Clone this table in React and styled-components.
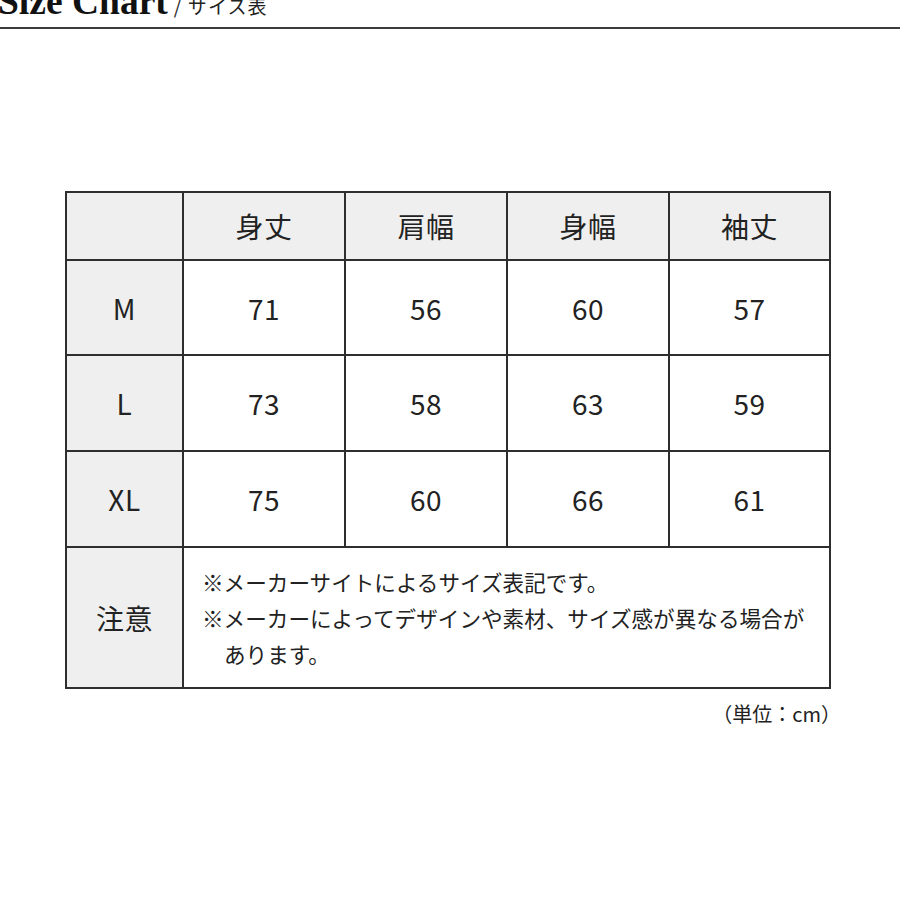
import React from "react";
import styled, { createGlobalStyle } from "styled-components";

const Global = createGlobalStyle`
  html, body { margin: 0; padding: 0; background: #fff; }
  body { font-family: "Noto Sans CJK JP", "Noto Sans", sans-serif; color: #222; }
`;

const Page = styled.div`
  width: 900px;
  height: 900px;
  overflow: hidden;
  position: relative;
`;

const Header = styled.header`
  height: 27px;
  border-bottom: 2px solid #3c3c3c;
  overflow: hidden;
  display: flex;
  align-items: flex-start;
`;

const Title = styled.h1`
  margin: -17px 0 0 -2px;
  font-family: "Liberation Serif", "Times New Roman", serif;
  font-weight: 700;
  font-size: 37.5px;
  line-height: 37px;
  color: #111;
  white-space: nowrap;
`;

const Sub = styled.span`
  font-family: "Noto Sans CJK JP", sans-serif;
  font-weight: 400;
  font-size: 19px;
  letter-spacing: 0.06em;
  color: #222;
  margin-left: 6px;
`;

const Body = styled.main`
  padding: 162px 0 0 65px;
  width: 767px;
`;

const Grid = styled.div`
  display: grid;
  grid-template-columns: 115px 160px 160px 160px 159px;
  grid-template-rows: 66px 93px 94px 94px 139px;
  gap: 2px;
  padding: 2px;
  background: #2e2e2e;
  width: max-content;
`;

const Cell = styled.div`
  background: ${(p) => (p.$head ? "#efefef" : "#fff")};
  display: flex;
  align-items: center;
  justify-content: center;
  font-size: 28px;
  color: #222;
  letter-spacing: 0.02em;
`;

const NoteCell = styled.div`
  grid-column: 2 / span 4;
  background: #fff;
  display: flex;
  flex-direction: column;
  justify-content: center;
  padding: 0 0 0 18px;
  font-size: 21.6px;
  line-height: 36px;
  color: #222;
  white-space: nowrap;
`;

const NoteLine = styled.div`
  padding-left: ${(p) => (p.$indent ? "22px" : "0")};
`;

const Unit = styled.div`
  text-align: right;
  font-size: 20px;
  margin: 10px -9px 0 0;
  color: #222;
`;

const headers = ["身丈", "肩幅", "身幅", "袖丈"];
const rows = [
  ["M", 71, 56, 60, 57],
  ["L", 73, 58, 63, 59],
  ["XL", 75, 60, 66, 61],
];

export default function App() {
  return (
    <Page>
      <Global />
      <Header>
        <Title>
          Size Chart<Sub>/ サイス表</Sub>
        </Title>
      </Header>
      <Body>
        <Grid>
          <Cell $head />
          {headers.map((h) => (
            <Cell $head key={h}>{h}</Cell>
          ))}
          {rows.map((r) => (
            <React.Fragment key={r[0]}>
              <Cell $head>{r[0]}</Cell>
              {r.slice(1).map((v, i) => (
                <Cell key={i}>{v}</Cell>
              ))}
            </React.Fragment>
          ))}
          <Cell $head>注意</Cell>
          <NoteCell>
            <NoteLine>※メーカーサイトによるサイズ表記です。</NoteLine>
            <NoteLine>※メーカーによってデザインや素材、サイズ感が異なる場合が</NoteLine>
            <NoteLine $indent>あります。</NoteLine>
          </NoteCell>
        </Grid>
        <Unit>（単位：cm）</Unit>
      </Body>
    </Page>
  );
}
